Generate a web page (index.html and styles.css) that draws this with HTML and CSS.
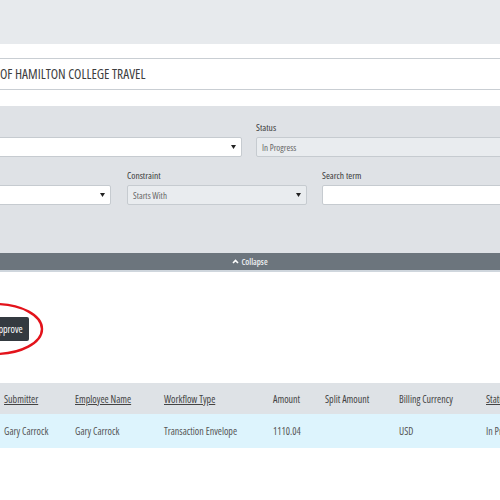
FILE: index.html
```html
<!DOCTYPE html>
<html lang="en">
<head>
    <meta charset="UTF-8">
    <meta name="viewport" content="width=device-width, initial-scale=1.0">
    <title>Transactions</title>
    <link rel="stylesheet" href="styles.css">
</head>
<body>
<div class="page">
    <!-- top bar -->
    <header class="topbar"></header>

    <!-- title -->
    <section class="title-band">
        <div class="title-box">OF HAMILTON COLLEGE TRAVEL</div>
    </section>

    <!-- filters -->
    <section class="filters">
        <div class="filter-row row-one">
            <div class="field">
                <label class="lbl">&nbsp;</label>
                <div class="select">
                    <span class="value"></span>
                    <svg class="caret" width="5" height="4" viewBox="0 0 5 4"><path d="M0 0H5L2.5 4Z" fill="#222"/></svg>
                </div>
            </div>
            <div class="field">
                <label class="lbl">Status</label>
                <div class="input disabled">In Progress</div>
            </div>
        </div>
        <div class="filter-row row-two">
            <div class="field">
                <label class="lbl">&nbsp;</label>
                <div class="select">
                    <span class="value"></span>
                    <svg class="caret" width="5" height="4" viewBox="0 0 5 4"><path d="M0 0H5L2.5 4Z" fill="#222"/></svg>
                </div>
            </div>
            <div class="field">
                <label class="lbl">Constraint</label>
                <div class="select disabled">
                    <span class="value">Starts With</span>
                    <svg class="caret" width="5" height="4" viewBox="0 0 5 4"><path d="M0 0H5L2.5 4Z" fill="#222"/></svg>
                </div>
            </div>
            <div class="field">
                <label class="lbl">Search term</label>
                <div class="input"></div>
            </div>
        </div>
    </section>
    <div class="collapse-bar">
        <svg width="7" height="5" viewBox="0 0 7 5"><path d="M1 4L3.5 1.5L6 4" fill="none" stroke="#fff" stroke-width="1.6"/></svg>
        <span>Collapse</span>
    </div>

    <!-- actions -->
    <div class="actions">
        <button class="btn-approve" type="button">Approve</button>
        <svg class="circle-mark" width="110" height="60" viewBox="0 0 110 60">
            <ellipse cx="55" cy="29" rx="47" ry="25" fill="none" stroke="#e3131b" stroke-width="2.4"/>
        </svg>
    </div>

    <!-- results -->
    <table class="results">
        <colgroup>
            <col style="width:71px">
            <col style="width:89px">
            <col style="width:109px">
            <col style="width:52px">
            <col style="width:74px">
            <col style="width:87px">
            <col style="width:78px">
        </colgroup>
        <thead>
            <tr>
                <th><a href="#">Submitter</a></th>
                <th><a href="#">Employee Name</a></th>
                <th><a href="#">Workflow Type</a></th>
                <th>Amount</th>
                <th>Split Amount</th>
                <th>Billing Currency</th>
                <th><a href="#">Status</a></th>
            </tr>
        </thead>
        <tbody>
            <tr>
                <td>Gary Carrock</td>
                <td>Gary Carrock</td>
                <td>Transaction Envelope</td>
                <td>1110.04</td>
                <td></td>
                <td>USD</td>
                <td>In Progress</td>
            </tr>
        </tbody>
    </table>
</div>
</body>
</html>
```

FILE: styles.css
```css
html, body {
    overflow: hidden;
}

body {
    margin: 0;
    padding: 0;
    background-color: #ffffff;
    font-family: "Open Sans", "DejaVu Sans Condensed", sans-serif;
    font-stretch: 75%;
    color: #444444;
}

.page {
    width: 500px;
}

.topbar {
    height: 44px;
    background-color: #e7eaed;
}

.title-band {
    padding: 14px 0 16px;
}

.title-box {
    height: 30px;
    line-height: 30px;
    border-top: 1px solid #c9ced3;
    border-bottom: 1px solid #c9ced3;
    font-size: 13.5px;
    color: #3d3d3d;
}

.filters {
    background-color: #dfe2e6;
    padding: 16px 0 48px;
    margin-left: -60px;
    width: 640px;
}

.filter-row {
    display: grid;
}

.row-one {
    grid-template-columns: 302px 1fr;
    column-gap: 14px;
}

.row-two {
    grid-template-columns: 171px 180px 1fr;
    column-gap: 16px;
    margin-top: 13px;
}

.row-two .field:last-child {
    margin-left: -1px;
}

.lbl {
    display: block;
    font-size: 9.5px;
    line-height: 12px;
    margin-bottom: 3px;
    color: #3a3a3a;
}

.select,
.input {
    box-sizing: border-box;
    height: 20px;
    border: 1px solid #c6cbd0;
    border-radius: 2px;
    background-color: #ffffff;
    font-size: 9px;
    color: #666666;
    padding: 0 5px;
    display: flex;
    align-items: center;
}

.select {
    justify-content: space-between;
}

.disabled {
    background-color: #e9ecef;
}

.collapse-bar {
    height: 17px;
    background-color: #6c757d;
    border-bottom: 2px solid #cfd6dd;
    display: flex;
    align-items: center;
    justify-content: center;
    gap: 2px;
    font-size: 8.5px;
    font-weight: 600;
    color: #eef0f2;
}

.actions {
    position: relative;
    margin-top: 44px;
    height: 24px;
}

.btn-approve {
    margin-left: -12px;
    height: 24px;
    padding: 0 6px;
    border: none;
    border-radius: 2px;
    background-color: #343a40;
    color: #ffffff;
    font-family: inherit;
    font-stretch: 75%;
    font-size: 10px;
}

.circle-mark {
    position: absolute;
    left: -60px;
    top: -16px;
}

.results {
    width: 560px;
    margin-top: 43px;
    border-collapse: collapse;
    table-layout: fixed;
    font-size: 10px;
}

.results th,
.results td {
    text-align: left;
    padding: 0 4px;
    white-space: nowrap;
    overflow: hidden;
}

.results th {
    height: 31px;
    background-color: #dee2e6;
    font-weight: normal;
    color: #444444;
}

.results th a {
    color: #444444;
    text-decoration: underline;
}

.results td {
    height: 34px;
    background-color: #ddf4fd;
    color: #555555;
}
```
